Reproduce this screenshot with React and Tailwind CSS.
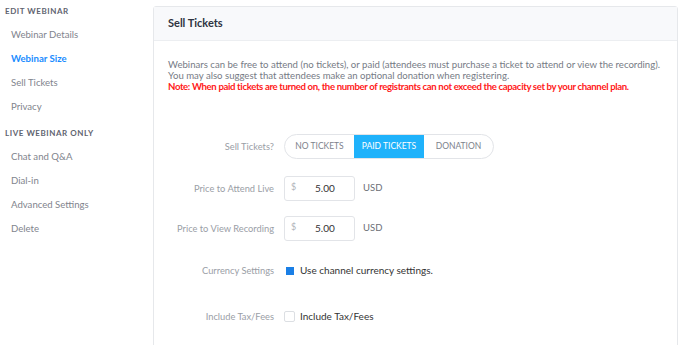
import React from 'react';

const Sidebar = () => (
	<div className="w-[153px] shrink-0 pt-[5px]">
		<div className="px-[5px] text-[8px] font-bold tracking-[0.07em] text-[#5f6470] leading-[12px]">EDIT WEBINAR</div>
		<div className="mt-[6px] flex flex-col">
			<div className="px-[11px] h-[24px] flex items-center text-[9.6px] text-[#7f848d]">Webinar Details</div>
			<div className="px-[11px] h-[24px] flex items-center text-[9.6px] font-bold text-[#1a8cff]">Webinar Size</div>
			<div className="px-[11px] h-[24px] flex items-center text-[9.6px] text-[#7f848d]">Sell Tickets</div>
			<div className="px-[11px] h-[24px] flex items-center text-[9.6px] text-[#7f848d]">Privacy</div>
		</div>
		<div className="mt-[8px] px-[5px] text-[8px] font-bold tracking-[0.07em] text-[#5f6470] leading-[12px]">LIVE WEBINAR ONLY</div>
		<div className="mt-[6px] flex flex-col">
			<div className="px-[11px] h-[24px] flex items-center text-[9.6px] text-[#7f848d]">Chat and Q&amp;A</div>
			<div className="px-[11px] h-[24px] flex items-center text-[9.6px] text-[#7f848d]">Dial-in</div>
			<div className="px-[11px] h-[24px] flex items-center text-[9.6px] text-[#7f848d]">Advanced Settings</div>
			<div className="px-[11px] h-[24px] flex items-center text-[9.6px] text-[#7f848d]">Delete</div>
		</div>
	</div>
);

const Row = ({ label, children, className = '' }) => (
	<div className={`flex items-center ${className}`}>
		<div className="w-[130px] text-right pr-[10px] text-[9.3px] text-[#9a9ea6] whitespace-nowrap">{label}</div>
		<div className="flex items-center">{children}</div>
	</div>
);

const PriceInput = () => (
	<>
		<div className="w-[71px] h-[25px] border border-[#e2e4e8] rounded-[3px] relative flex items-center">
			<span className="absolute left-[6px] top-[3px] text-[9px] text-[#b0b4ba]">$</span>
			<span className="ml-[30px] text-[10px] text-[#333]">5.00</span>
		</div>
		<span className="ml-[8px] text-[9.5px] text-[#6b6f76]">USD</span>
	</>
);

const App = () => {
	return (
		<div className="w-[688px] h-[345px] bg-white flex overflow-hidden" style={{ fontFamily: 'Lato, "Noto Sans", sans-serif' }}>
			<Sidebar />
			<div className="mt-[6px] w-[525px] border border-[#e6e8eb] rounded-t-[3px] shrink-0 h-[400px]">
				<div className="h-[34px] bg-[#f8f9fb] border-b border-[#eceef1] flex items-center px-[14px] text-[11px] font-bold text-[#2d3340]">Sell Tickets</div>
				<div className="px-[14px] pt-[18px] text-[9.6px] leading-[11px] whitespace-nowrap">
					<p className="text-[#767b85]">Webinars can be free to attend (no tickets), or paid (attendees must purchase a ticket to attend or view the recording).</p>
					<p className="text-[#767b85]">You may also suggest that attendees make an optional donation when registering.</p>
					<p className="text-[#ff1a1a] font-bold tracking-[-0.36px]">Note: When paid tickets are turned on, the number of registrants can not exceed the capacity set by your channel plan.</p>
				</div>
				<Row label="Sell Tickets?" className="mt-[42px]">
					<div className="h-[25px] flex border border-[#e2e4e8] rounded-full overflow-hidden text-[8.5px]">
						<div className="w-[69px] flex items-center justify-center text-[#7d828c]">NO TICKETS</div>
						<div className="w-[70px] flex items-center justify-center bg-[#1fb2fb] text-white">PAID TICKETS</div>
						<div className="w-[69px] flex items-center justify-center text-[#7d828c]">DONATION</div>
					</div>
				</Row>
				<Row label="Price to Attend Live" className="mt-[17px]">
					<PriceInput />
				</Row>
				<Row label="Price to View Recording" className="mt-[15px]">
					<PriceInput />
				</Row>
				<Row label="Currency Settings" className="mt-[22px]">
					<div className="w-[11px] h-[11px] flex items-center justify-center">
						<div className="w-[8px] h-[8px] bg-[#1a7fe6]" />
					</div>
					<span className="ml-[5px] text-[10px] text-[#333]">Use channel currency settings.</span>
				</Row>
				<Row label="Include Tax/Fees" className="mt-[31px]">
					<div className="w-[11px] h-[11px] border border-[#dcdfe3] rounded-[2px]" />
					<span className="ml-[5px] text-[10px] text-[#333]">Include Tax/Fees</span>
				</Row>
			</div>
		</div>
	);
};

export default App;
